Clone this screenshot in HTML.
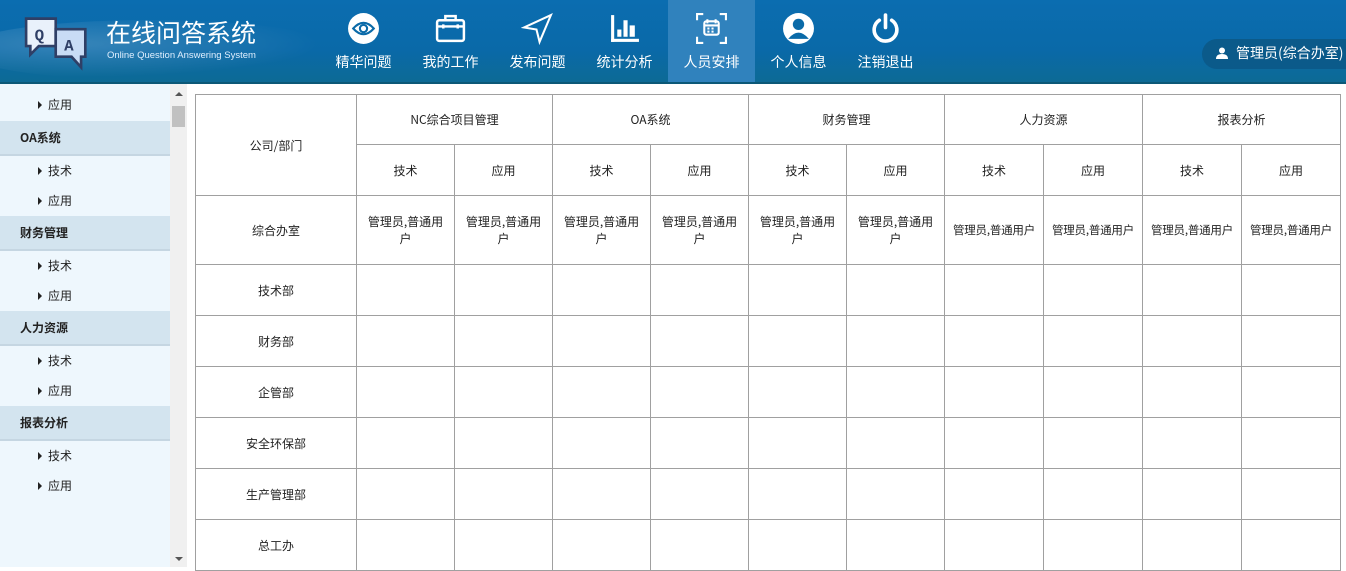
<!DOCTYPE html>
<html><head><meta charset="utf-8"><style>
*{margin:0;padding:0;box-sizing:border-box}
body{width:1346px;height:567px;overflow:hidden;font-family:"Liberation Sans","Noto Sans CJK SC",sans-serif;background:#fff;position:relative}
.hd{position:absolute;left:0;top:0;width:1346px;height:84px;background:linear-gradient(180deg,#0b6db0 0%,#0a69a8 60%,#0d6a94 100%);overflow:hidden}
.hd:after{content:"";position:absolute;left:0;top:82px;width:1346px;height:2px;background:#0c5877}
.glow{position:absolute;left:-40px;top:20px;width:380px;height:60px;border-radius:50%;background:radial-gradient(ellipse at 30% 40%,rgba(255,255,255,.18),rgba(255,255,255,0) 65%)}
.title{position:absolute;left:106px;top:14px;color:#fff;font-size:25px;font-family:"Noto Sans CJK SC",sans-serif}
.sub{position:absolute;left:107px;top:50px;color:#dfefff;font-size:9.5px}
.nav{position:absolute;top:0;height:82px;width:87px;color:#fff;text-align:center;font-size:14px;font-family:"Noto Sans CJK SC",sans-serif}
.nav.on{background:#3082bd}
.nav svg{position:absolute;left:27px;top:12px}
.nav span{position:absolute;left:0;right:0;top:52px}
.user{position:absolute;left:1202px;top:39px;width:160px;height:30px;border-radius:15px;background:#0b5a8a;color:#fff;font-size:14px;font-family:"Noto Sans CJK SC",sans-serif;line-height:28px;padding-left:34px}
.side{position:absolute;left:0;top:84px;width:170px;height:483px;background:#eef7fd}
.it{height:30px;line-height:30px;font-size:12px;color:#222;padding-left:48px;position:relative;font-family:"Noto Sans CJK SC",sans-serif}
.it:before{content:"";position:absolute;left:38px;top:11px;border-left:4px solid #222;border-top:4px solid transparent;border-bottom:4px solid transparent}
.it.f{height:37px;line-height:42px}
.it.f:before{top:17px}
.gp{height:35px;line-height:33px;font-size:12px;font-weight:bold;color:#222;padding-left:20px;background:#d3e4ef;border-bottom:2px solid #c5d6e2;font-family:"Noto Sans CJK SC",sans-serif}
.sb{position:absolute;left:170px;top:84px;width:17px;height:483px;background:#f0f0f0}
table{position:absolute;left:195px;top:94px;border-collapse:collapse;font-size:12px;color:#222;font-family:"Noto Sans CJK SC",sans-serif;table-layout:fixed}
td{border:1px solid #a0a0a0;text-align:center;vertical-align:middle;line-height:17px}
td.w{padding:0 8px}
td.n{padding:0;font-size:11.5px;letter-spacing:-0.2px}
</style></head><body>
<div class="hd"><div class="glow"></div>
<svg style="position:absolute;left:24px;top:16px" width="74" height="56" viewBox="0 0 70 52">
<path d="M2 2h28v26H14l-8 8v-8H2z" fill="#e9f1fb" stroke="#2f3f66" stroke-width="2.5"/>
<text x="10" y="22" font-size="15" font-weight="bold" fill="#2f3f66" font-family="Liberation Mono">Q</text>
<path d="M30 12h28v26h-4v10l-9-10H30z" fill="#c9dcf5" stroke="#2f3f66" stroke-width="2.5"/>
<text x="38" y="32" font-size="15" font-weight="bold" fill="#2f3f66" font-family="Liberation Mono">A</text></svg>
<div class="title">在线问答系统</div><div class="sub">Online Question Answering System</div>
<div class="nav" style="left:320px"><svg width="33" height="33" viewBox="0 0 32 32"><circle cx="16" cy="16" r="15" fill="#fff"/><path d="M6 16q10-11 20 0q-10 11-20 0z" fill="none" stroke="#0a6aa8" stroke-width="2"/><circle cx="16" cy="16" r="3.5" fill="none" stroke="#0a6aa8" stroke-width="2"/></svg><span>精华问题</span></div>
<div class="nav" style="left:407px"><svg width="33" height="33" viewBox="0 0 32 32" fill="none" stroke="#fff" stroke-width="2.4"><rect x="3" y="8" width="26" height="20" rx="2"/><path d="M11 8V4h10v4M3 14h26M9 12v4M23 12v4"/></svg><span>我的工作</span></div>
<div class="nav" style="left:494px"><svg width="33" height="33" viewBox="0 0 32 32" fill="none" stroke="#fff" stroke-width="2"><path d="M29 3L3 15l12 2 3 12z"/></svg><span>发布问题</span></div>
<div class="nav" style="left:581px"><svg width="33" height="33" viewBox="0 0 32 32" fill="#fff"><rect x="3" y="3" width="3" height="26"/><rect x="3" y="26" width="27" height="3"/><rect x="9" y="17" width="4" height="7"/><rect x="15" y="8" width="4" height="16"/><rect x="21" y="13" width="5" height="11"/></svg><span>统计分析</span></div>
<div class="nav on" style="left:668px"><svg width="33" height="33" viewBox="0 0 32 32" fill="none" stroke="#fff" stroke-width="2"><path d="M2 8V2h6M24 2h6v6M30 24v6h-6M8 30H2v-6"/><rect x="9" y="9" width="14" height="13" rx="2"/><path d="M12 7v4M20 7v4M9 13h14M12 16h2M16 16h2M12 19h2M16 19h2"/></svg><span>人员安排</span></div>
<div class="nav" style="left:755px"><svg width="33" height="33" viewBox="0 0 32 32"><circle cx="16" cy="16" r="15" fill="#fff"/><circle cx="16" cy="12" r="5.5" fill="#0a6aa8"/><path d="M6 26q10-12 20 0" fill="#0a6aa8"/></svg><span>个人信息</span></div>
<div class="nav" style="left:842px"><svg width="33" height="33" viewBox="0 0 32 32" fill="none" stroke="#fff" stroke-width="3.5" stroke-linecap="round"><path d="M10 8a11 11 0 1 0 12 0"/><path d="M16 3v12"/></svg><span>注销退出</span></div>
<div class="user"><svg style="position:absolute;left:14px;top:8px" width="12" height="12" viewBox="0 0 12 12" fill="#fff"><circle cx="6" cy="3.5" r="3"/><path d="M0 12q0-5 6-5t6 5z"/></svg>管理员(综合办室)</div>
</div>
<div class="side">
<div class="it f">应用</div>
<div class="gp">OA系统</div><div class="it">技术</div><div class="it">应用</div>
<div class="gp">财务管理</div><div class="it">技术</div><div class="it">应用</div>
<div class="gp">人力资源</div><div class="it">技术</div><div class="it">应用</div>
<div class="gp">报表分析</div><div class="it">技术</div><div class="it">应用</div>
</div>
<div class="sb"><div style="position:absolute;left:2px;top:22px;width:13px;height:21px;background:#c1c1c1"></div>
<div style="position:absolute;left:5px;top:8px;border-bottom:4px solid #555;border-left:4px solid transparent;border-right:4px solid transparent"></div>
<div style="position:absolute;left:5px;top:473px;border-top:4px solid #555;border-left:4px solid transparent;border-right:4px solid transparent"></div></div>
<table>
<colgroup><col style="width:161px"><col style="width:98px"><col style="width:98px"><col style="width:98px"><col style="width:98px"><col style="width:98px"><col style="width:98px"><col style="width:99px"><col style="width:99px"><col style="width:99px"><col style="width:99px"></colgroup>
<tr style="height:50px"><td rowspan="2">公司/部门</td><td colspan="2">NC综合项目管理</td><td colspan="2">OA系统</td><td colspan="2">财务管理</td><td colspan="2">人力资源</td><td colspan="2">报表分析</td></tr>
<tr style="height:51px"><td>技术</td><td>应用</td><td>技术</td><td>应用</td><td>技术</td><td>应用</td><td>技术</td><td>应用</td><td>技术</td><td>应用</td></tr>
<tr style="height:69px"><td>综合办室</td><td class="w">管理员,普通用户</td><td class="w">管理员,普通用户</td><td class="w">管理员,普通用户</td><td class="w">管理员,普通用户</td><td class="w">管理员,普通用户</td><td class="w">管理员,普通用户</td><td class="n">管理员,普通用户</td><td class="n">管理员,普通用户</td><td class="n">管理员,普通用户</td><td class="n">管理员,普通用户</td></tr>
<tr style="height:51px"><td>技术部</td><td></td><td></td><td></td><td></td><td></td><td></td><td></td><td></td><td></td><td></td></tr>
<tr style="height:51px"><td>财务部</td><td></td><td></td><td></td><td></td><td></td><td></td><td></td><td></td><td></td><td></td></tr>
<tr style="height:51px"><td>企管部</td><td></td><td></td><td></td><td></td><td></td><td></td><td></td><td></td><td></td><td></td></tr>
<tr style="height:51px"><td>安全环保部</td><td></td><td></td><td></td><td></td><td></td><td></td><td></td><td></td><td></td><td></td></tr>
<tr style="height:51px"><td>生产管理部</td><td></td><td></td><td></td><td></td><td></td><td></td><td></td><td></td><td></td><td></td></tr>
<tr style="height:51px"><td>总工办</td><td></td><td></td><td></td><td></td><td></td><td></td><td></td><td></td><td></td><td></td></tr>
</table>
</body></html>
